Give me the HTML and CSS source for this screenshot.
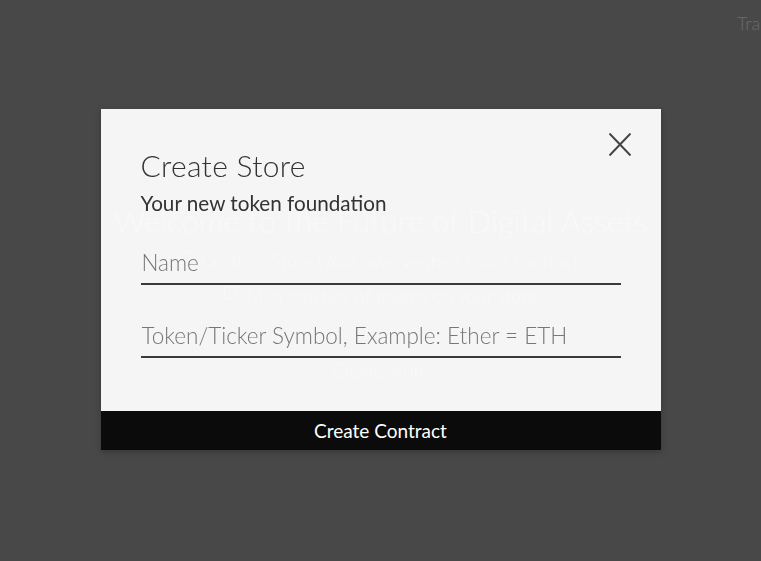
FILE: index.html
```html
<!DOCTYPE html>
<html>
<head>
<meta charset="utf-8">
<link rel="stylesheet" href="styles.css">
</head>
<body>
<header class="topbar">
  <nav class="nav"><span class="nav-item">Transfer</span></nav>
</header>
<main class="hero">
  <h1 class="hero-title">Welcome to the Future of Digital Assets</h1>
  <p class="hero-line"><span class="hero-icon"></span>Create a Store (Your own verified smart contract)</p>
  <p class="hero-line"><span class="hero-icon"></span>Mint batches of tokens on your store</p>
  <p class="hero-btn">Create Store</p>
</main>
<div class="overlay">
  <div class="modal">
    <div class="modal-body">
      <button class="close" aria-label="Close">
        <svg width="22" height="23" viewBox="0 0 22 23"><path d="M0.5 0.5 L21.5 22.5 M21.5 0.5 L0.5 22.5" stroke="#444" stroke-width="2" fill="none"/></svg>
      </button>
      <h2 class="modal-title">Create Store</h2>
      <p class="modal-sub">Your new token foundation</p>
      <div class="field field-first"><input class="input" placeholder="Name"></div>
      <div class="field field-second"><input class="input" placeholder="Token/Ticker Symbol, Example: Ether = ETH"></div>
    </div>
    <button class="submit">Create Contract</button>
  </div>
</div>
</body>
</html>
```
FILE: styles.css
```css
html, body {
  margin: 0;
  padding: 0;
  height: 100%;
  overflow: hidden;
}
body {
  background: #484848;
  font-family: Lato, "Open Sans", sans-serif;
}
.topbar {
  padding-top: 12px;
  padding-left: 737px;
  white-space: nowrap;
}
.nav-item {
  font-size: 18px;
  font-weight: 300;
  color: #6c6c6c;
}
.hero {
  display: flex;
  flex-direction: column;
  align-items: center;
  padding-top: 169px;
  color: #fff;
}
.hero-title {
  margin: 0;
  font-size: 31px;
  font-weight: 300;
  line-height: 36px;
  white-space: nowrap;
}
.hero-line {
  margin: 0;
  margin-top: 7px;
  font-size: 18.3px;
  font-weight: 300;
  line-height: 31px;
  display: flex;
  align-items: center;
  gap: 10px;
}
.hero-line + .hero-line {
  margin-top: 4px;
}
.hero-icon {
  width: 11px;
  height: 11px;
  border: 1px solid #fff;
  border-radius: 2px;
  margin-top: -8px;
}
.hero-btn {
  margin: 0;
  margin-top: 47px;
  font-size: 18px;
  font-weight: 300;
}
.overlay {
  position: fixed;
  inset: 0;
  display: flex;
  align-items: center;
  justify-content: center;
}
.modal {
  width: 560px;
  margin-top: -2px;
  background: rgba(248, 248, 248, 0.985);
  box-shadow: 0 2px 6px rgba(0, 0, 0, 0.25);
  display: flex;
  flex-direction: column;
}
.modal-body {
  position: relative;
  padding: 32px 40px 53px;
}
.close {
  position: absolute;
  top: 24px;
  right: 30px;
  width: 22px;
  height: 23px;
  padding: 0;
  border: 0;
  background: none;
  display: flex;
}
.modal-title {
  margin: 0;
  font-size: 30px;
  font-weight: 300;
  line-height: 48px;
  color: #333;
  letter-spacing: 0.3px;
}
.modal-sub {
  margin: 0;
  font-size: 20.7px;
  font-weight: 400;
  line-height: 28px;
  color: #333;
}
.field-first {
  margin-top: 23px;
}
.field-second {
  margin-top: 28px;
}
.input {
  display: block;
  width: 100%;
  box-sizing: border-box;
  border: 0;
  border-bottom: 2px solid #3a3a3a;
  background: transparent;
  padding: 8px 1px 5px;
  font-family: Lato, sans-serif;
  font-size: 22.5px;
  font-weight: 300;
  line-height: 30px;
  color: #333;
  outline: none;
}
.input::placeholder {
  color: #777;
}
.submit {
  display: block;
  width: 100%;
  height: 39px;
  border: 0;
  background: #0b0b0b;
  color: #fff;
  font-family: Lato, sans-serif;
  font-size: 19px;
  font-weight: 400;
  padding: 0;
}
```
